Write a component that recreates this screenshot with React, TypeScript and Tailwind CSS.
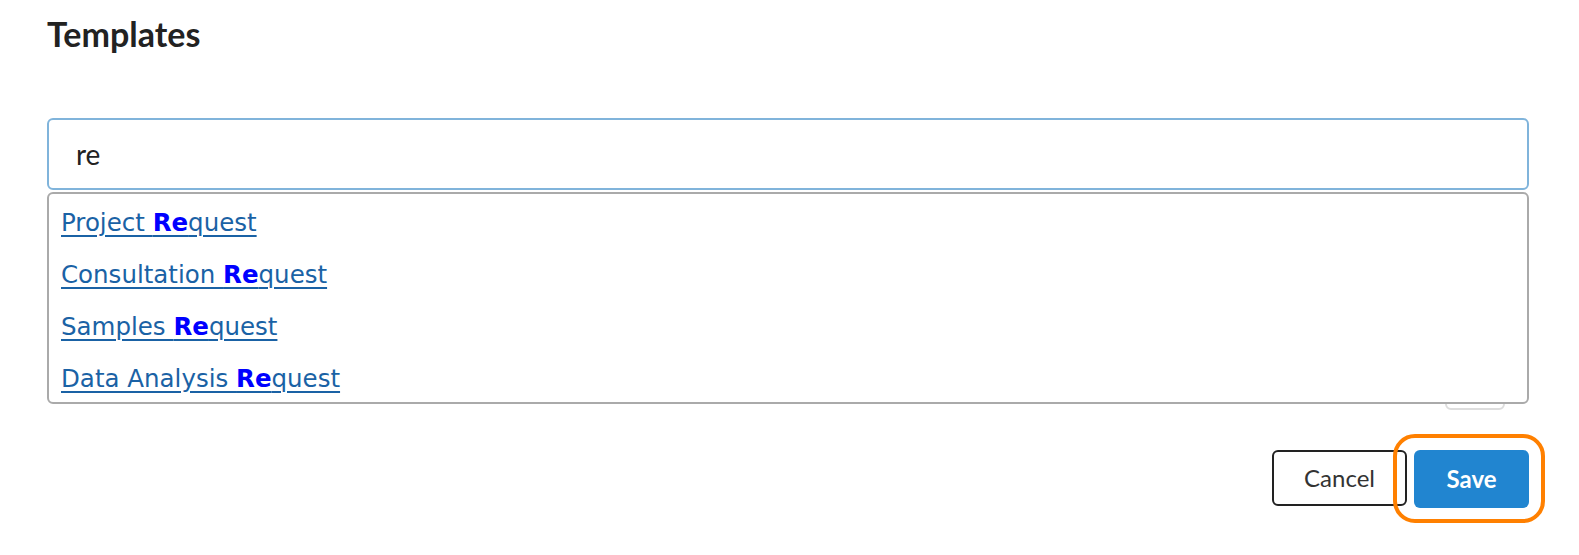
const options = ["Project ", "Consultation ", "Samples ", "Data Analysis "];

export default function App() {
  return (
    <div className="min-h-[555px] bg-white pl-[47px] pr-[50px] pt-[12px] font-['Lato','Liberation_Sans',sans-serif]">
      <h1 className="text-[34px] font-bold leading-[44px] text-[#222]">Templates</h1>

      <div className="relative mt-[62px]">
        <div className="flex h-[72px] items-center rounded-md border-2 border-[#80b4db] px-[27px] text-[28px] text-[#222]">
          re
        </div>

        {/* suggestions list, lies over the form */}
        <div className="absolute left-0 right-0 top-full z-10 mt-[2px] rounded-md border-2 border-[#aaa] bg-white font-['DejaVu_Sans',sans-serif]">
          {options.map((o) => (
            <div key={o} className="flex h-[52px] items-center px-[12px] pt-[6px]">
              <a href="#" className="text-[24.5px] text-[#1a62a5] underline decoration-[2px] underline-offset-[4px]">
                {o}
                <b className="text-[#0000ff]">Re</b>
                quest
              </a>
            </div>
          ))}
        </div>
      </div>

      <div className="mt-[180px] flex justify-end pr-[24px]">
        <div className="h-[40px] w-[60px] rounded-md border-2 border-[#ddd]"></div>
      </div>

      <div className="mt-[40px] flex justify-end gap-[7px]">
        <button className="h-[56px] w-[135px] rounded-md border-2 border-[#222] bg-white text-[24px] text-[#333]">
          Cancel
        </button>
        <div className="relative">
          <button className="h-[58px] w-[115px] rounded-md bg-[#2185d0] text-[24px] font-bold text-white">
            Save
          </button>
          <div className="pointer-events-none absolute -bottom-[15px] -left-[21px] -right-[16px] -top-[16px] rounded-[22px] border-[4px] border-[#ff8000]"></div>
        </div>
      </div>
    </div>
  );
}
